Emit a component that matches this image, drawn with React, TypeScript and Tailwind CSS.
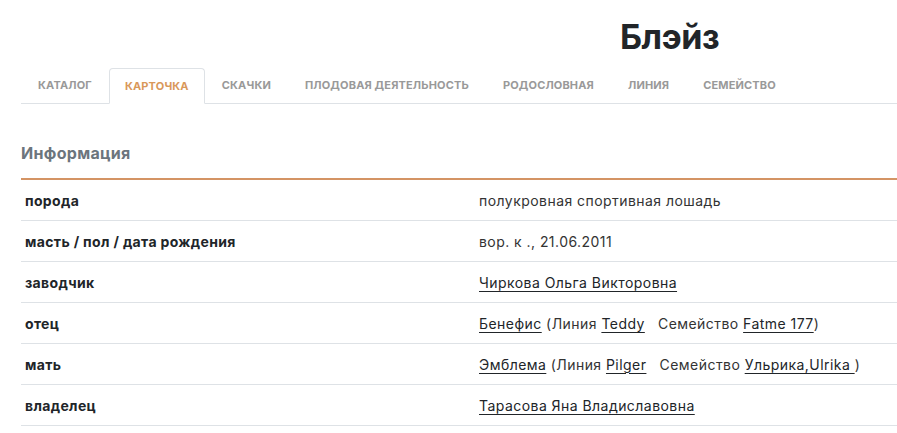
import React from "react";

const tabs = ["КАТАЛОГ", "КАРТОЧКА", "СКАЧКИ", "ПЛОДОВАЯ ДЕЯТЕЛЬНОСТЬ", "РОДОСЛОВНАЯ", "ЛИНИЯ", "СЕМЕЙСТВО"];

const L = ({ children }: { children: React.ReactNode }) => (
  <a className="underline underline-offset-[3px] decoration-1 text-[#212529]">{children}</a>
);

const rows: { label: string; value: React.ReactNode }[] = [
  { label: "порода", value: "полукровная спортивная лошадь" },
  { label: "масть / пол / дата рождения", value: "вор. к ., 21.06.2011" },
  { label: "заводчик", value: <L>Чиркова Ольга Викторовна</L> },
  {
    label: "отец",
    value: (
      <>
        <L>Бенефис</L> (Линия <L>Teddy</L>&nbsp;&nbsp; Семейство <L>Fatme 177</L>)
      </>
    ),
  },
  {
    label: "мать",
    value: (
      <>
        <L>Эмблема</L> (Линия <L>Pilger</L>&nbsp;&nbsp; Семейство <L>Ульрика,Ulrika </L>)
      </>
    ),
  },
  { label: "владелец", value: <L>Тарасова Яна Владиславовна</L> },
];

export default function App() {
  return (
    <div className="w-[897px] h-[433px] overflow-hidden bg-white font-['Inter',sans-serif]">
      <div className="w-[1100px] pl-[21px]">
        <div className="pl-[599px] pt-[16px] h-[68px]">
          <h1 className="text-[34px] font-bold leading-[42px] text-[#212529] tracking-[-0.4px]">Блэйз</h1>
        </div>
        <div className="flex border-b border-[#dee2e6] h-[36px]">
          {tabs.map((t, i) => (
            <div
              key={t}
              className={
                i === 1
                  ? "px-[15px] h-[36px] flex items-center text-[11px] font-bold tracking-[0.15px] text-[#d9985a] border border-[#dee2e6] border-b-white rounded-t-[4px] bg-white"
                  : "px-[16px] h-[35px] flex items-center text-[11px] font-bold tracking-[0.15px] text-[#999999] border border-transparent"
              }
            >
              {t}
            </div>
          ))}
        </div>
        <div className="pt-[37px]">
          <h2 className="text-[16px] font-bold text-[#6c757d] leading-[24px] pb-[13px] tracking-[0.3px]">Информация</h2>
          <div className="border-t-2 border-[#d49464]">
            {rows.map((r) => (
              <div key={r.label} className="grid grid-cols-[458px_1fr] h-[41px] items-center border-b border-[#dee2e6] text-[14px]">
                <div className="pl-[4px] font-bold text-[#212529] tracking-[0.35px]">{r.label}</div>
                <div className="text-[#333333] tracking-[0.45px]">{r.value}</div>
              </div>
            ))}
          </div>
        </div>
      </div>
    </div>
  );
}
